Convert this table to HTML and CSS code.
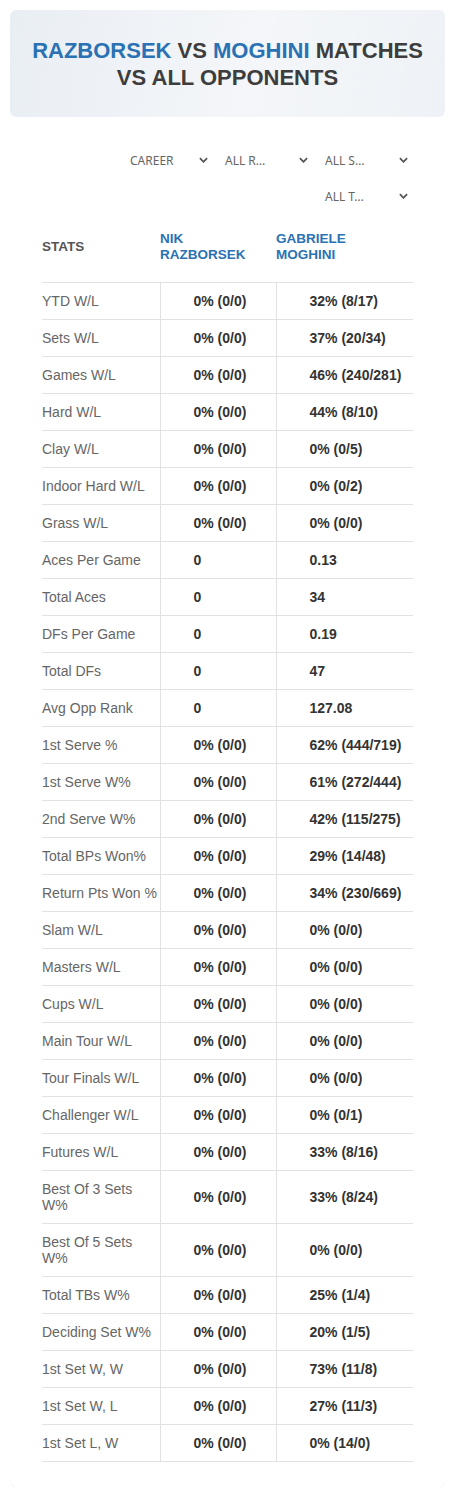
FILE: index.html
```html
<!DOCTYPE html>
<html lang="en">
<head>
    <meta charset="UTF-8">
    <meta name="viewport" content="width=device-width, initial-scale=1.0">
    <title>Razborsek vs Moghini - Matches vs All Opponents</title>
    <link rel="stylesheet" href="styles.css">
</head>
<body>

<header class="title-box">
    <h1><span class="player">Razborsek</span> vs <span class="player">Moghini</span> matches vs all opponents</h1>
</header>

<div class="card">
    <div class="filters">
        <div class="filter first"><span>CAREER</span><svg viewBox="0 0 10 6"><path d="M1 1l4 4 4-4"/></svg></div>
        <div class="filter"><span>ALL R&hellip;</span><svg viewBox="0 0 10 6"><path d="M1 1l4 4 4-4"/></svg></div>
        <div class="filter"><span>ALL S&hellip;</span><svg viewBox="0 0 10 6"><path d="M1 1l4 4 4-4"/></svg></div>
        <div class="filter"><span>ALL T&hellip;</span><svg viewBox="0 0 10 6"><path d="M1 1l4 4 4-4"/></svg></div>
    </div>

    <table class="stats">
        <thead>
            <tr>
                <th class="label-col">STATS</th>
                <th class="name">NIK<br>RAZBORSEK</th>
                <th class="name">GABRIELE<br>MOGHINI</th>
            </tr>
        </thead>
        <tbody id="statsBody"></tbody>
    </table>
</div>

<script>
    // stat label, razborsek, moghini
    let rows = [
        ["YTD W/L", "0% (0/0)", "32% (8/17)"],
        ["Sets W/L", "0% (0/0)", "37% (20/34)"],
        ["Games W/L", "0% (0/0)", "46% (240/281)"],
        ["Hard W/L", "0% (0/0)", "44% (8/10)"],
        ["Clay W/L", "0% (0/0)", "0% (0/5)"],
        ["Indoor Hard W/L", "0% (0/0)", "0% (0/2)"],
        ["Grass W/L", "0% (0/0)", "0% (0/0)"],
        ["Aces Per Game", "0", "0.13"],
        ["Total Aces", "0", "34"],
        ["DFs Per Game", "0", "0.19"],
        ["Total DFs", "0", "47"],
        ["Avg Opp Rank", "0", "127.08"],
        ["1st Serve %", "0% (0/0)", "62% (444/719)"],
        ["1st Serve W%", "0% (0/0)", "61% (272/444)"],
        ["2nd Serve W%", "0% (0/0)", "42% (115/275)"],
        ["Total BPs Won%", "0% (0/0)", "29% (14/48)"],
        ["Return Pts Won %", "0% (0/0)", "34% (230/669)"],
        ["Slam W/L", "0% (0/0)", "0% (0/0)"],
        ["Masters W/L", "0% (0/0)", "0% (0/0)"],
        ["Cups W/L", "0% (0/0)", "0% (0/0)"],
        ["Main Tour W/L", "0% (0/0)", "0% (0/0)"],
        ["Tour Finals W/L", "0% (0/0)", "0% (0/0)"],
        ["Challenger W/L", "0% (0/0)", "0% (0/1)"],
        ["Futures W/L", "0% (0/0)", "33% (8/16)"],
        ["Best Of 3 Sets W%", "0% (0/0)", "33% (8/24)"],
        ["Best Of 5 Sets W%", "0% (0/0)", "0% (0/0)"],
        ["Total TBs W%", "0% (0/0)", "25% (1/4)"],
        ["Deciding Set W%", "0% (0/0)", "20% (1/5)"],
        ["1st Set W, W", "0% (0/0)", "73% (11/8)"],
        ["1st Set W, L", "0% (0/0)", "27% (11/3)"],
        ["1st Set L, W", "0% (0/0)", "0% (14/0)"]
    ];

    let html = "";
    rows.forEach(r => {
        html += `<tr><td class="label">${r[0]}</td><td class="value">${r[1]}</td><td class="value">${r[2]}</td></tr>`;
    });
    document.getElementById('statsBody').innerHTML = html;
</script>

</body>
</html>
```

FILE: styles.css
```css
/* General Styling */
body {
    font-family: 'Liberation Sans', Arial, sans-serif;
    margin: 10px;
    background-color: #fff;
    color: #333;
}

.title-box {
    background: linear-gradient(100deg, #e9eef3 0%, #f4f6f9 55%, #eef2f6 100%);
    border-radius: 6px;
    padding: 27px 16px 26px;
    text-align: center;
}

.title-box h1 {
    margin: 0;
    font-size: 22px;
    line-height: 27px;
    font-weight: bold;
    text-transform: uppercase;
    color: #3d3d3d;
}

.player {
    color: #2a72b3;
}

.card {
    margin-top: 12px;
    padding: 17px 32px 25px;
    background-color: white;
    border-radius: 8px;
    box-shadow: 0 1px 2px rgba(0, 0, 0, 0.06);
}

/* Filters */
.filters {
    display: flex;
    flex-wrap: wrap;
    justify-content: flex-end;
    row-gap: 8px;
}

.filter {
    width: 100px;
    height: 28px;
    box-sizing: border-box;
    padding: 0 5px 0 12px;
    display: flex;
    align-items: center;
    justify-content: space-between;
    font-family: 'Noto Sans', sans-serif;
    font-size: 12px;
    color: #666;
}

.filter.first {
    padding-left: 17px;
}

.filter svg {
    width: 9px;
    height: 6px;
    fill: none;
    stroke: #555;
    stroke-width: 2;
}

/* Table */
.stats {
    width: 100%;
    border-collapse: collapse;
    margin-top: 10px;
    font-size: 14px;
}

.stats th {
    text-align: left;
    font-size: 13.5px;
    line-height: 16px;
    padding: 11px 0 19px;
    border-bottom: 1px solid #e2e2e2;
    color: #555;
}

.stats th.label-col {
    width: 118px;
}

.stats th.name {
    color: #2a72b3;
    width: 116px;
}

.stats th.name:last-child {
    width: auto;
}

.stats td {
    line-height: 16px;
    padding: 10px 0;
    border-bottom: 1px solid #e2e2e2;
    vertical-align: middle;
}

.label {
    color: #666;
}

.value {
    font-weight: bold;
    color: #333;
    padding-left: 33px !important;
    border-left: 1px solid #e2e2e2;
}
```
